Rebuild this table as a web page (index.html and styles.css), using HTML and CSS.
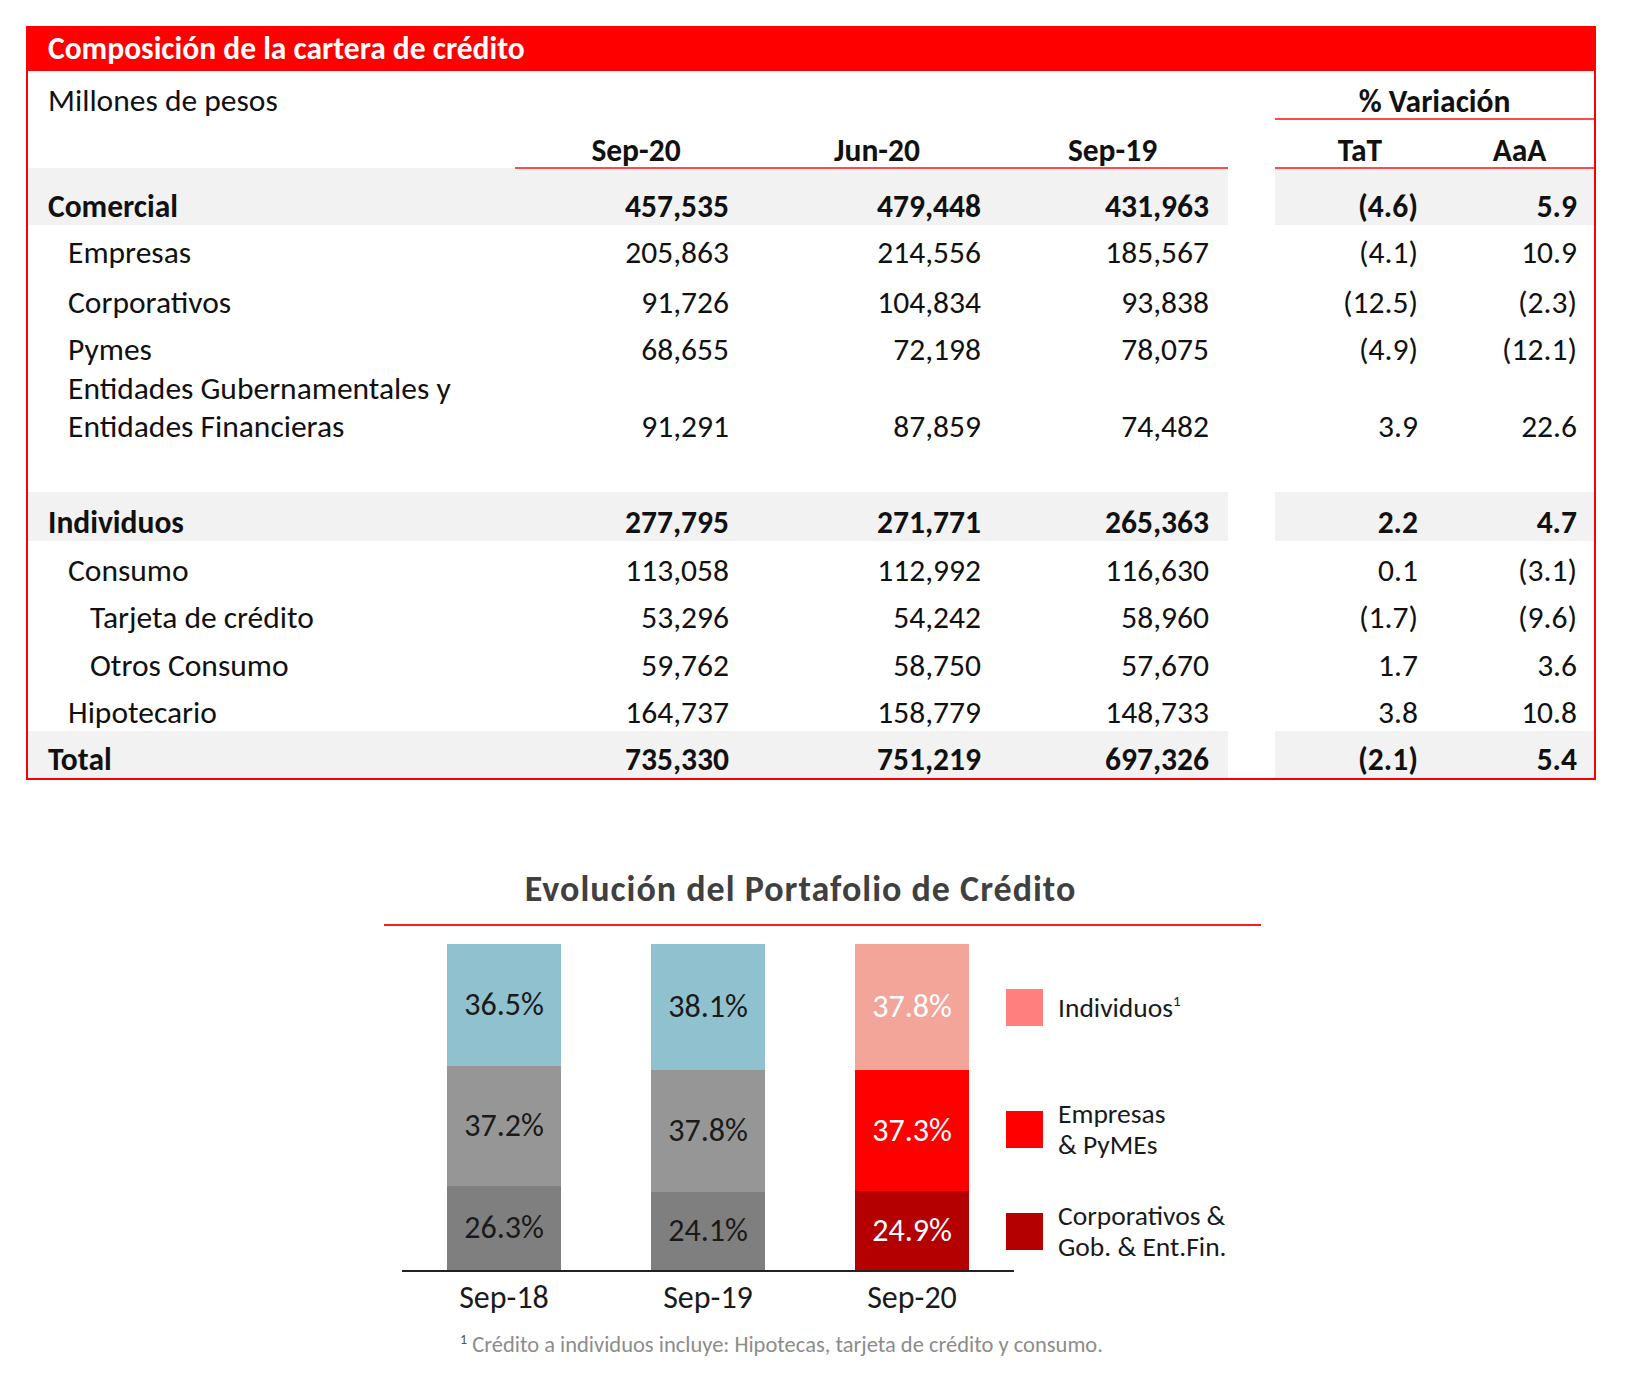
FILE: index.html
```html
<!DOCTYPE html>
<html lang="es">
<head>
<meta charset="utf-8">
<title>Composición de la cartera de crédito</title>
<link rel="stylesheet" href="styles.css">
</head>
<body>
<div class="page">
  <section class="card">
    <div class="card-head">Composición de la cartera de crédito</div>
    <table class="grid">
      <colgroup>
        <col class="w-label"><col class="w-c1"><col class="w-c2"><col class="w-c3"><col class="w-gap"><col class="w-tat"><col class="w-aaa">
      </colgroup>
      <tr class="r-units">
        <td class="lbl">Millones de pesos</td><td></td><td></td><td></td><td></td>
        <td colspan="2" class="hd line">% Variación</td>
      </tr>
      <tr class="r-colhead">
        <td></td>
        <td class="hd line">Sep-20</td><td class="hd line">Jun-20</td><td class="hd line">Sep-19</td>
        <td></td>
        <td class="hd line">TaT</td><td class="hd line">AaA</td>
      </tr>
      <tr class="r-sum h57">
        <td class="lbl">Comercial</td><td class="n1">457,535</td><td class="n2">479,448</td><td class="n3">431,963</td><td class="gap"></td><td class="nt">(4.6)</td><td class="na">5.9</td>
      </tr>
      <tr class="h46">
        <td class="lbl i1">Empresas</td><td class="n1">205,863</td><td class="n2">214,556</td><td class="n3">185,567</td><td></td><td class="nt">(4.1)</td><td class="na">10.9</td>
      </tr>
      <tr class="h50">
        <td class="lbl i1">Corporativos</td><td class="n1">91,726</td><td class="n2">104,834</td><td class="n3">93,838</td><td></td><td class="nt">(12.5)</td><td class="na">(2.3)</td>
      </tr>
      <tr class="h47">
        <td class="lbl i1">Pymes</td><td class="n1">68,655</td><td class="n2">72,198</td><td class="n3">78,075</td><td></td><td class="nt">(4.9)</td><td class="na">(12.1)</td>
      </tr>
      <tr class="h77">
        <td class="lbl i1 two">Entidades Gubernamentales y<br>Entidades Financieras</td><td class="n1">91,291</td><td class="n2">87,859</td><td class="n3">74,482</td><td></td><td class="nt">3.9</td><td class="na">22.6</td>
      </tr>
      <tr class="h47"><td></td><td></td><td></td><td></td><td></td><td></td><td></td></tr>
      <tr class="r-sum h49">
        <td class="lbl">Individuos</td><td class="n1">277,795</td><td class="n2">271,771</td><td class="n3">265,363</td><td class="gap"></td><td class="nt">2.2</td><td class="na">4.7</td>
      </tr>
      <tr class="h48">
        <td class="lbl i1">Consumo</td><td class="n1">113,058</td><td class="n2">112,992</td><td class="n3">116,630</td><td></td><td class="nt">0.1</td><td class="na">(3.1)</td>
      </tr>
      <tr class="h47">
        <td class="lbl i2">Tarjeta de crédito</td><td class="n1">53,296</td><td class="n2">54,242</td><td class="n3">58,960</td><td></td><td class="nt">(1.7)</td><td class="na">(9.6)</td>
      </tr>
      <tr class="h48">
        <td class="lbl i2">Otros Consumo</td><td class="n1">59,762</td><td class="n2">58,750</td><td class="n3">57,670</td><td></td><td class="nt">1.7</td><td class="na">3.6</td>
      </tr>
      <tr class="h47">
        <td class="lbl i1">Hipotecario</td><td class="n1">164,737</td><td class="n2">158,779</td><td class="n3">148,733</td><td></td><td class="nt">3.8</td><td class="na">10.8</td>
      </tr>
      <tr class="r-sum h47">
        <td class="lbl">Total</td><td class="n1">735,330</td><td class="n2">751,219</td><td class="n3">697,326</td><td class="gap"></td><td class="nt">(2.1)</td><td class="na">5.4</td>
      </tr>
    </table>
  </section>

  <section class="chart">
    <div class="chart-title"><span>Evolución del Portafolio de Crédito</span></div>
    <div class="chart-body">
      <div class="plot">
        <div class="bars">
          <div class="col">
            <div class="bar">
              <div class="seg s-blue" style="height:37.4%">36.5%</div>
              <div class="seg s-gray" style="height:36.8%">37.2%</div>
              <div class="seg s-dgray" style="height:25.8%">26.3%</div>
            </div>
          </div>
          <div class="col">
            <div class="bar">
              <div class="seg s-blue" style="height:38.6%">38.1%</div>
              <div class="seg s-gray" style="height:37.4%">37.8%</div>
              <div class="seg s-dgray" style="height:24%">24.1%</div>
            </div>
          </div>
          <div class="col">
            <div class="bar">
              <div class="seg s-lred" style="height:38.6%">37.8%</div>
              <div class="seg s-red" style="height:37.2%">37.3%</div>
              <div class="seg s-dred" style="height:24.2%">24.9%</div>
            </div>
          </div>
        </div>
        <div class="labels">
          <div>Sep-18</div><div>Sep-19</div><div>Sep-20</div>
        </div>
      </div>
      <ul class="legend">
        <li class="lg1"><span class="sw sw-lred"></span><span class="lt">Individuos<sup>1</sup></span></li>
        <li class="lg2"><span class="sw sw-red"></span><span class="lt">Empresas<br>&amp; PyMEs</span></li>
        <li class="lg3"><span class="sw sw-dred"></span><span class="lt">Corporativos &amp;<br>Gob. &amp; Ent.Fin.</span></li>
      </ul>
    </div>
    <p class="note"><sup>1</sup> Crédito a individuos incluye: Hipotecas, tarjeta de crédito y consumo.</p>
  </section>
</div>
</body>
</html>
```
FILE: styles.css
```css
* { box-sizing: border-box; }
html, body { margin: 0; padding: 0; background: #ffffff; }
body { font-family: Carlito, Lato, "Liberation Sans", sans-serif; color: #111111; }

.page { padding: 26px 0 0 26px; }

.card {
  width: 1570px;
  border: 2px solid #ff0000;
  border-top: 0;
}
.card-head {
  height: 45px;
  margin: 0 -2px;
  background: #ff0000;
  color: #ffffff;
  font-weight: 700;
  font-size: 31.5px;
  line-height: 45px;
  padding-left: 22px;
}

.grid {
  border-collapse: collapse;
  table-layout: fixed;
  width: 1566px;
  font-size: 31.5px;
}
.w-label { width: 487px; }
.w-c1 { width: 242px; }
.w-c2 { width: 240px; }
.w-c3 { width: 231px; }
.w-gap { width: 47px; }
.w-tat { width: 170px; }
.w-aaa { width: 149px; }

.grid td {
  padding: 0 0 2px 0;
  vertical-align: bottom;
  line-height: 34px;
  white-space: nowrap;
}
.r-units { height: 48px; }
.r-colhead { height: 49px; }
.h46 { height: 46px; }
.h47 { height: 47px; }
.h48 { height: 48px; }
.h49 { height: 49px; }
.h50 { height: 50px; }
.h57 { height: 57px; }
.h77 { height: 77px; }

.grid td.hd { font-weight: 700; text-align: center; padding-bottom: 0; }
.grid td.line { border-bottom: 2px solid #ff4b4b; }

.lbl { padding-left: 20px !important; }
.lbl.i1 { padding-left: 40px !important; }
.lbl.i2 { padding-left: 62px !important; }
.grid td.two { line-height: 38px; padding-bottom: 0; white-space: normal; }

.n1, .n2, .n3, .nt, .na { text-align: right; }
.grid td.n1 { padding-right: 28px; }
.grid td.n2 { padding-right: 16px; }
.grid td.n3 { padding-right: 19px; }
.grid td.nt { padding-right: 27px; }
.grid td.na { padding-right: 17px; }

.r-sum td { background: #f2f2f2; font-weight: 700; }
.r-sum td.gap { background: #ffffff; }

/* chart */
.chart {
  margin: 89px 0 0 358px;
  width: 877px;
}
.chart-title {
  border-bottom: 2px solid #ff1a1a;
  padding: 0 44px 15px 0;
  text-align: center;
  color: #404040;
  font-size: 36px;
  letter-spacing: 1px;
  font-weight: 700;
  line-height: 40px;
}
.chart-body {
  display: flex;
  align-items: flex-start;
  margin-top: 18px;
}
.plot { margin-left: 18px; width: 612px; }
.bars {
  display: grid;
  grid-template-columns: repeat(3, 204px);
  height: 328px;
  border-bottom: 2px solid #222222;
}
.col { display: flex; justify-content: center; }
.bar {
  width: 114px;
  height: 326px;
  display: flex;
  flex-direction: column;
}
.seg {
  display: flex;
  align-items: center;
  justify-content: center;
  font-size: 32px;
  color: #1a1a1a;
}
.s-blue { background: #8fc1ce; }
.s-gray { background: #969696; }
.s-dgray { background: #7f7f7f; }
.s-lred { background: #f2a598; color: #ffffff; }
.s-red { background: #ff0000; color: #ffffff; }
.s-dred { background: #b40000; color: #ffffff; }

.labels {
  display: grid;
  grid-template-columns: repeat(3, 204px);
  margin-top: 8px;
  text-align: center;
  font-size: 32px;
  line-height: 36px;
  color: #1a1a1a;
}

.legend {
  list-style: none;
  margin: 0 0 0 -8px;
  padding: 0;
  font-size: 27.5px;
  line-height: 31px;
  color: #1a1a1a;
}
.legend li { display: flex; align-items: center; gap: 15px; }
.lg1 { margin-top: 45px; height: 37px; }
.lg2 { margin-top: 72px; height: 62px; }
.lg3 { margin-top: 40px; height: 62px; }
.sw { width: 37px; height: 37px; flex: none; }
.sw-lred { background: #ff7f7f; }
.sw-red { background: #ff0000; }
.sw-dred { background: #b40000; }
.lt sup { font-size: 15px; vertical-align: 11px; line-height: 0; }

.note {
  margin: 15px 0 0 76px;
  font-size: 22.5px;
  line-height: 28px;
  color: #8c8c8c;
  white-space: nowrap;
}
.note sup { font-size: 14px; vertical-align: 8px; line-height: 0; color: #555555; }
```
